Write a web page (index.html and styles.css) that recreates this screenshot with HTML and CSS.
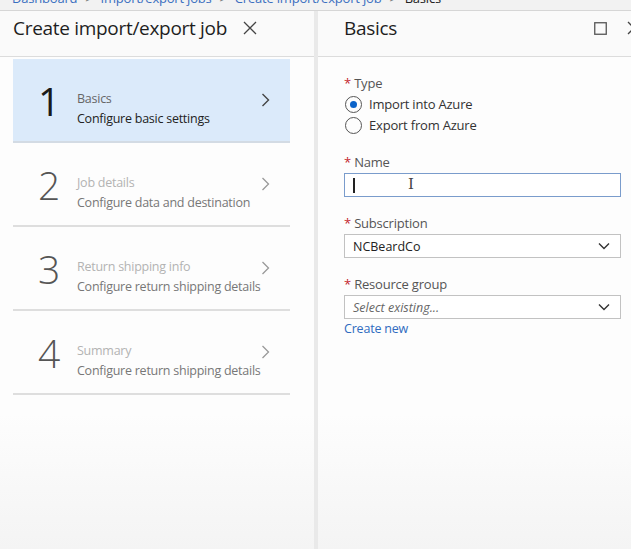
FILE: index.html
```html
<!DOCTYPE html>
<html>
<head>
<meta charset="utf-8">
<link rel="stylesheet" href="styles.css">
</head>
<body>
<div class="crumbs">
  <div class="crumbs-text">
    <a>Dashboard</a><span class="sep">&gt;</span><a>Import/export jobs</a><span class="sep">&gt;</span><a>Create import/export job</a><span class="sep">&gt;</span><span class="cur">Basics</span>
  </div>
</div>
<div class="panes">
  <section class="left">
    <header class="head">
      <h1>Create import/export job</h1>
      <svg class="x" width="14" height="14" viewBox="0 0 14 14"><path d="M1 1L13 13M13 1L1 13" stroke="#444" stroke-width="1.3" fill="none"/></svg>
    </header>
    <ul class="steps">
      <li class="step active">
        <span class="num">1</span>
        <div class="txt"><div class="t">Basics</div><div class="s">Configure basic settings</div></div>
        <svg class="chev" width="9" height="14" viewBox="0 0 9 14"><path d="M1.5 1L7.5 7L1.5 13" stroke="#444" stroke-width="1.4" fill="none"/></svg>
      </li>
      <li class="step">
        <span class="num">2</span>
        <div class="txt"><div class="t">Job details</div><div class="s">Configure data and destination</div></div>
        <svg class="chev" width="9" height="14" viewBox="0 0 9 14"><path d="M1.5 1L7.5 7L1.5 13" stroke="#999" stroke-width="1.3" fill="none"/></svg>
      </li>
      <li class="step">
        <span class="num">3</span>
        <div class="txt"><div class="t">Return shipping info</div><div class="s">Configure return shipping details</div></div>
        <svg class="chev" width="9" height="14" viewBox="0 0 9 14"><path d="M1.5 1L7.5 7L1.5 13" stroke="#999" stroke-width="1.3" fill="none"/></svg>
      </li>
      <li class="step">
        <span class="num">4</span>
        <div class="txt"><div class="t">Summary</div><div class="s">Configure return shipping details</div></div>
        <svg class="chev" width="9" height="14" viewBox="0 0 9 14"><path d="M1.5 1L7.5 7L1.5 13" stroke="#999" stroke-width="1.3" fill="none"/></svg>
      </li>
    </ul>
  </section>
  <div class="divider"></div>
  <section class="right">
    <header class="head rhead">
      <h1>Basics</h1>
      <div class="icons">
        <svg width="13" height="13" viewBox="0 0 13 13"><rect x="0.75" y="0.75" width="11.5" height="11.5" stroke="#555" stroke-width="1.3" fill="none"/></svg>
        <svg width="14" height="14" viewBox="0 0 14 14"><path d="M1 1L13 13M13 1L1 13" stroke="#444" stroke-width="1.3" fill="none"/></svg>
      </div>
    </header>
    <form class="form">
      <div class="field">
        <div class="label"><span class="req">*</span> Type</div>
        <label class="radio"><span class="dot on"></span>Import into Azure</label>
        <label class="radio"><span class="dot"></span>Export from Azure</label>
      </div>
      <div class="field">
        <div class="label"><span class="req">*</span> Name</div>
        <div class="input focus"><span class="caret"></span><span class="ibeam">I</span></div>
      </div>
      <div class="field">
        <div class="label"><span class="req">*</span> Subscription</div>
        <div class="input select"><span>NCBeardCo</span>
          <svg width="12" height="8" viewBox="0 0 12 8"><path d="M1 1.5L6 6.5L11 1.5" stroke="#333" stroke-width="1.4" fill="none"/></svg></div>
      </div>
      <div class="field">
        <div class="label"><span class="req">*</span> Resource group</div>
        <div class="input select"><span class="ph">Select existing...</span>
          <svg width="12" height="8" viewBox="0 0 12 8"><path d="M1 1.5L6 6.5L11 1.5" stroke="#333" stroke-width="1.4" fill="none"/></svg></div>
        <a class="link">Create new</a>
      </div>
    </form>
  </section>
</div>
</body>
</html>
```

FILE: styles.css
```css
* { box-sizing: border-box; }
html, body { margin: 0; padding: 0; }
body {
  width: 631px;
  height: 549px;
  overflow: hidden;
  font-family: "Open Sans", "Noto Sans", sans-serif;
  background: #fcfcfc;
  color: #222;
}
.crumbs {
  height: 11px;
  overflow: hidden;
  background: #f2f2f2;
  border-bottom: 1px solid #d6d6d6;
  padding-left: 12px;
}
.crumbs-text {
  margin-top: -10px;
  font-size: 13px;
  line-height: 16px;
  white-space: nowrap;
  letter-spacing: -0.2px;
}
.crumbs a { color: #3a6fc0; }
.crumbs .sep { color: #777; margin: 0 8px; }
.crumbs .cur { color: #222; }
.panes {
  display: flex;
  height: 538px;
  background: linear-gradient(#fdfdfd 75%, #f4f4f4);
}
.left { width: 314px; }
.divider { width: 4px; background: #e9e9e9; }
.right { flex: 1; overflow: hidden; }
.head {
  height: 46px;
  border-bottom: 1px solid #dcdcdc;
  display: flex;
  align-items: flex-start;
  padding: 5px 0 0 13px;
  background: #fafafa;
}
.head h1 {
  margin: 0;
  font-weight: 400;
  font-size: 19px;
  line-height: 24px;
  letter-spacing: -0.3px;
  flex: 1;
  color: #1e1e1e;
}
.head > svg, .icons { margin-top: 5px; }
.left .head { padding-right: 57px; }
.rhead { padding-left: 26px; }
.icons { display: flex; gap: 20px; align-items: center; margin-right: -10px; }
.steps {
  list-style: none;
  margin: 2px 0 0 13px;
  padding: 0;
  width: 277px;
}
.step {
  height: 84px;
  border-bottom: 2px solid #dedede;
  display: flex;
  align-items: center;
  padding-left: 25px;
}
.step.active { background: #dbeafa; border-bottom-color: #d3dbe4; }
.num {
  width: 39px;
  flex-shrink: 0;
  font-size: 39px;
  font-weight: 300;
  color: #555;
  line-height: 1;
  margin-top: 0px;
}
.active .num { color: #1a1a1a; font-weight: 400; }
.txt {
  flex: 1;
  min-width: 0;
  white-space: nowrap;
  font-size: 12.5px;
  line-height: 20px;
  letter-spacing: -0.25px;
  margin-top: 17px;
}
.txt .t { color: #b3b3b3; }
.txt .s { color: #777; }
.active .txt .t { color: #666; }
.active .txt .s { color: #222; }
.chev { flex-shrink: 0; margin-right: 20px; margin-top: 0px; }
.form { padding: 16px 10px 0 26px; }
.field { margin-bottom: 16px; width: 277px; }
.label { font-size: 13px; color: #555; line-height: 20px; letter-spacing: -0.2px; margin-bottom: 1px; }
.req { color: #c4262e; }
.radio {
  display: flex;
  align-items: center;
  font-size: 13px;
  color: #333;
  line-height: 21px;
  letter-spacing: -0.2px;
}
.dot {
  width: 17px;
  height: 17px;
  border: 1.5px solid #555;
  border-radius: 50%;
  margin-right: 7px;
  margin-left: 1px;
  position: relative;
}
.dot.on::after {
  content: "";
  position: absolute;
  left: 3.5px;
  top: 3.5px;
  width: 7px;
  height: 7px;
  border-radius: 50%;
  background: #0b63c9;
}
.input {
  height: 24px;
  border: 1px solid #c2c2c2;
  background: #fff;
  display: flex;
  align-items: center;
  padding: 0 8px;
  font-size: 12.5px;
  color: #222;
}
.input.focus { border: 1.5px solid #7a9ccc; position: relative; }
.caret { width: 1.5px; height: 15px; background: #222; margin-left: 0; }
.ibeam {
  position: absolute;
  left: 63px;
  top: 1px;
  font-family: "DejaVu Serif", serif;
  font-size: 15px;
  color: #444;
  line-height: 18px;
}
.select { justify-content: space-between; }
.select svg { margin-right: 2px; }
.ph { font-style: italic; color: #666; }
.link { display: block; color: #2f6bc0; font-size: 12.5px; margin-top: 1px; letter-spacing: -0.2px; }
```
